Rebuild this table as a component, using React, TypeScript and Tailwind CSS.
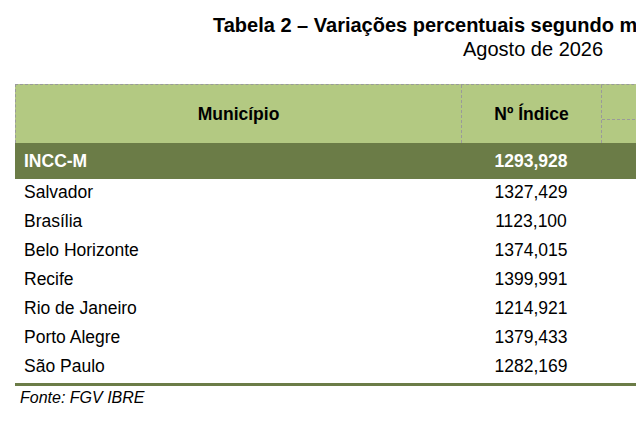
const ROWS: [string, string][] = [
  ["Salvador", "1327,429"],
  ["Brasília", "1123,100"],
  ["Belo Horizonte", "1374,015"],
  ["Recife", "1399,991"],
  ["Rio de Janeiro", "1214,921"],
  ["Porto Alegre", "1379,433"],
  ["São Paulo", "1282,169"],
];

export default function App() {
  return (
    <div
      className="h-[446px] w-[636px] overflow-hidden bg-white text-black"
      style={{ fontFamily: '"Liberation Sans", Arial, sans-serif' }}
    >
      {/* título */}
      <div className="w-[1100px] pt-[13px]">
        <div className="whitespace-nowrap pl-[213px] text-[20px] font-bold leading-[24px]">
          Tabela 2 – Variações percentuais segundo municípios
        </div>
        <div className="whitespace-nowrap pl-[463px] text-[20px] leading-[24px]">Agosto de 2026</div>
      </div>

      {/* tabela */}
      <div className="ml-[15px] mt-[23px] w-[900px]">
        <div className="flex h-[59px] border-l border-t border-dashed border-[#9a9a9a] bg-[#b3c982] text-[17.5px] font-bold">
          <div className="flex w-[446px] items-center justify-center border-r border-dashed border-[#9a9a9a]">
            Município
          </div>
          <div className="flex w-[140px] items-center justify-center border-r border-dashed border-[#9a9a9a]">
            Nº Índice
          </div>
          <div className="flex flex-1 flex-col">
            <div className="h-[35px] border-b border-dashed border-[#9a9a9a]" />
            <div className="flex-1" />
          </div>
        </div>

        <div className="flex h-[36px] items-center bg-[#6b7c47] text-[17.5px] font-bold text-white">
          <div className="w-[446px] pl-[9px]">INCC-M</div>
          <div className="w-[140px] text-center">1293,928</div>
        </div>

        <div className="pb-[1px]">
          {ROWS.map(([city, idx]) => (
            <div key={city} className="flex h-[29px] items-center pb-[2px] text-[17.5px]">
              <div className="w-[446px] pl-[9px]">{city}</div>
              <div className="w-[140px] text-center">{idx}</div>
            </div>
          ))}
        </div>

        <div className="h-[3px] bg-[#6b7c47]" />
      </div>

      <div className="pl-[20px] pt-[2px] text-[16px] italic leading-[20px]">Fonte: FGV IBRE</div>
    </div>
  );
}
